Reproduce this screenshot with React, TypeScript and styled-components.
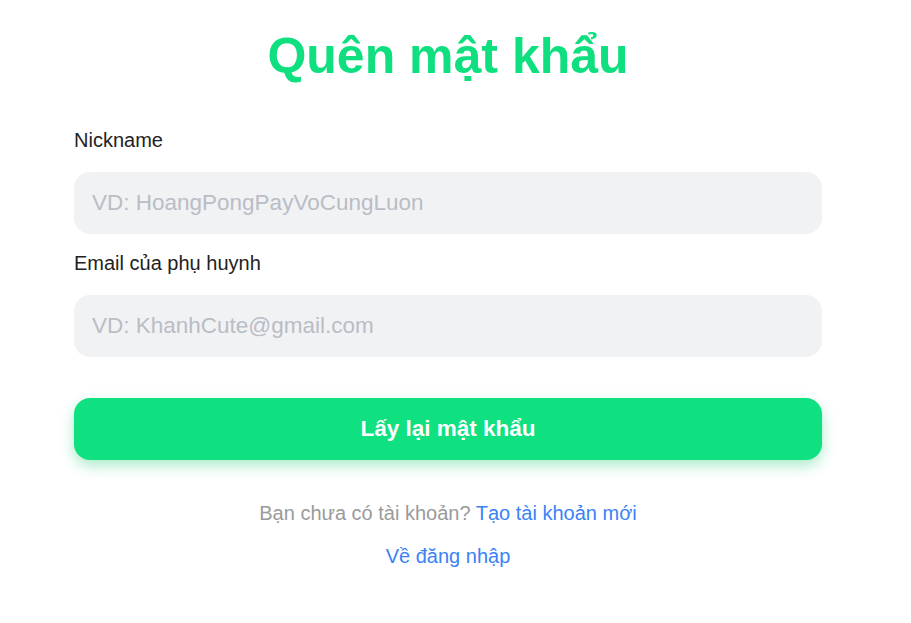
import React from "react";
import styled, { createGlobalStyle } from "styled-components";

const GlobalStyle = createGlobalStyle`
  html, body {
    margin: 0;
    padding: 0;
    background: #ffffff;
    font-family: "Liberation Sans", Arial, sans-serif;
  }
  * { box-sizing: border-box; }
`;

const Page = styled.div`
  display: flex;
  justify-content: center;
  padding: 28px 15px 40px 0;
  min-height: 623px;
`;

const Card = styled.div`
  width: 748px;
  display: flex;
  flex-direction: column;
`;

const Title = styled.h1`
  margin: 0 0 42px;
  font-size: 50px;
  line-height: 56px;
  font-weight: 700;
  color: #10df80;
  text-align: center;
`;

const Field = styled.div`
  display: flex;
  flex-direction: column;
  margin-bottom: 15px;
`;

const Label = styled.label`
  font-size: 20px;
  line-height: 28px;
  color: #222222;
  margin-bottom: 18px;
`;

const Input = styled.input`
  height: 62px;
  width: 100%;
  border: none;
  outline: none;
  border-radius: 16px;
  background: #f1f2f4;
  padding: 0 18px;
  font-family: "Liberation Sans", Arial, sans-serif;
  font-size: 22.5px;
  color: #222;
  &::placeholder {
    color: #b9bdc5;
  }
`;

const SubmitButton = styled.button`
  margin-top: 26px;
  height: 62px;
  width: 100%;
  border: none;
  border-radius: 16px;
  background: #0fe080;
  color: #ffffff;
  font-family: "Liberation Sans", Arial, sans-serif;
  font-size: 22.5px;
  font-weight: 700;
  box-shadow: 0 6px 14px rgba(16, 200, 110, 0.35);
  cursor: pointer;
`;

const FooterLine = styled.p<{ $gap: number }>`
  margin: ${(p) => p.$gap}px 0 0;
  font-size: 20px;
  line-height: 28px;
  text-align: center;
  color: #9a9a9a;
`;

const Link = styled.a`
  color: #3b82f6;
  text-decoration: none;
`;

export default function App() {
  return (
    <>
      <GlobalStyle />
      <Page>
        <Card>
          <Title>Quên mật khẩu</Title>
          <Field>
            <Label>Nickname</Label>
            <Input placeholder="VD: HoangPongPayVoCungLuon" />
          </Field>
          <Field>
            <Label>Email của phụ huynh</Label>
            <Input placeholder="VD: KhanhCute@gmail.com" />
          </Field>
          <SubmitButton>Lấy lại mật khẩu</SubmitButton>
          <FooterLine $gap={39}>
            Bạn chưa có tài khoản? <Link href="#">Tạo tài khoản mới</Link>
          </FooterLine>
          <FooterLine $gap={15}>
            <Link href="#">Về đăng nhập</Link>
          </FooterLine>
        </Card>
      </Page>
    </>
  );
}
